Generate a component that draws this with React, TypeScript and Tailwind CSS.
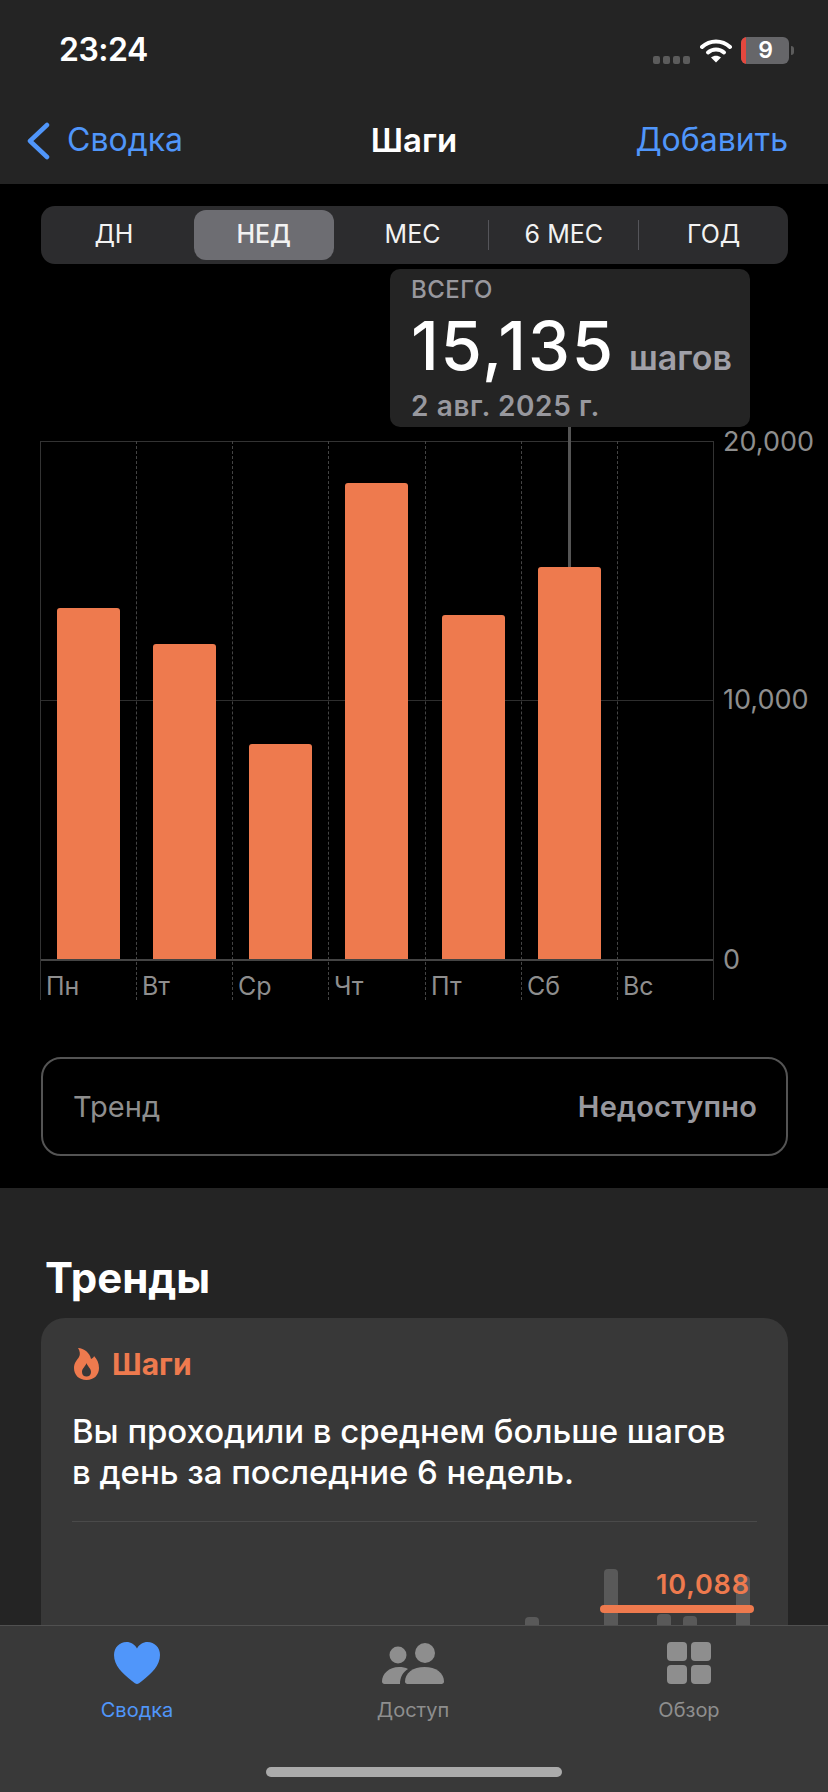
const FONT = "font-['Inter','Noto_Sans',sans-serif]";

const days = [
  { label: "Пн", w: "w-[96px]", top: "pt-[167px]", h: "h-[351px]" },
  { label: "Вт", w: "w-[96px]", top: "pt-[203px]", h: "h-[315px]" },
  { label: "Ср", w: "w-[96px]", top: "pt-[303px]", h: "h-[215px]" },
  { label: "Чт", w: "w-[97px]", top: "pt-[42px]", h: "h-[476px]" },
  { label: "Пт", w: "w-[96px]", top: "pt-[174px]", h: "h-[344px]" },
  { label: "Сб", w: "w-[96px]", top: "pt-[126px]", h: "h-[392px]" },
  { label: "Вс", w: "w-[97px]", top: "pt-[518px]", h: "h-0" },
];

function Wifi() {
  return (
    <svg width="32" height="25" viewBox="0 0 32 25" fill="none">
      <path d="M2 9 C 10 1.5, 22 1.5, 30 9" stroke="#fff" strokeWidth="4" strokeLinecap="round" />
      <path d="M8 14.5 C 12.5 10.5, 19.5 10.5, 24 14.5" stroke="#fff" strokeWidth="4" strokeLinecap="round" />
      <path d="M16 24.5 L11 19.5 C 14 17, 18 17, 21 19.5 Z" fill="#fff" />
    </svg>
  );
}

function Heart() {
  return (
    <svg width="46" height="42" viewBox="0 0 46 42">
      <path
        d="M23 42 C 21.8 42 20.4 41 18 39 C 8 31 0 23.5 0 13 C 0 5.5 5.5 0 12.5 0 C 17 0 20.8 2.4 23 6.5 C 25.2 2.4 29 0 33.5 0 C 40.5 0 46 5.5 46 13 C 46 23.5 38 31 28 39 C 25.6 41 24.2 42 23 42 Z"
        fill="#5096fa"
      />
    </svg>
  );
}

function People() {
  return (
    <svg width="62" height="41" viewBox="0 0 62 41" fill="#8e8e8e">
      <circle cx="16" cy="12" r="8.5" />
      <circle cx="43" cy="10" r="10" />
      <path d="M0 38.5 C 0 31 7 24 17 24 C 20.5 24 23.5 24.6 26 26 C 21 29 18 34 18 41 L2.5 41 C 1 41 0 40 0 38.5 Z" />
      <path d="M23 38.5 C 23 30 31 24 42.5 24 C 54 24 62 30 62 38.5 C 62 40 61 41 59.5 41 L25.5 41 C 24 41 23 40 23 38.5 Z" />
    </svg>
  );
}

function Flame() {
  return (
    <svg width="25" height="32" viewBox="0 0 25 32">
      <path
        d="M4 0 C 10 0 16 5 17 11 C 19 10 20 9 20 8 C 23 11 25 15 25 20 C 25 27 20 32 12.5 32 C 5 32 0 27 0 20 C 0 15 3 12 5 9 C 6.5 6.5 6 3 4 0 Z M12.5 15 C 12 18 8 20 8 24 C 8 27 10 28.5 12.5 28.5 C 15 28.5 17 27 17 24 C 17 20 13 18 12.5 15 Z"
        fill="#ee7a4e"
        fillRule="evenodd"
      />
    </svg>
  );
}

function Segment({ text, active, w }: { text: string; active?: boolean; w: string }) {
  return (
    <div
      className={`${w} h-[50px] flex items-center justify-center text-[25px] text-[#f2f2f2] ${
        active ? "bg-[#6d6d72] rounded-[12px] font-medium" : ""
      }`}
    >
      {text}
    </div>
  );
}

function Tab({ label, active, children }: { label: string; active?: boolean; children: React.ReactNode }) {
  return (
    <div className="w-[150px] flex flex-col items-center">
      <div className="h-[44px] flex items-center">{children}</div>
      <div className={`mt-[13px] text-[20px] leading-[24px] ${active ? "text-[#5096fa]" : "text-[#8e8e8e]"}`}>{label}</div>
    </div>
  );
}

export default function App() {
  return (
    <div className={`${FONT} relative w-[828px] h-[1792px] overflow-hidden bg-black text-white`}>
      {/* Header */}
      <header className="h-[184px] bg-[#242424]">
        <div className="h-[100px] relative">
          <div className="absolute left-[59px] top-[30px] text-[32px] leading-[40px] font-semibold tracking-[-0.5px]">23:24</div>
          <div className="absolute right-[34px] top-[36px] flex items-center">
            <div className="flex gap-[3px] mr-[10px] mt-[20px]">
              <span className="w-[7px] h-[8px] rounded-[2px] bg-[#5c5c5c]" />
              <span className="w-[7px] h-[8px] rounded-[2px] bg-[#5c5c5c]" />
              <span className="w-[7px] h-[8px] rounded-[2px] bg-[#5c5c5c]" />
              <span className="w-[7px] h-[8px] rounded-[2px] bg-[#5c5c5c]" />
            </div>
            <Wifi />
            <div className="ml-[9px] w-[48px] h-[27px] rounded-[6px] overflow-hidden bg-[#666669] flex">
              <span className="w-[5px] bg-[#e5483e]" />
              <span className="flex-1 text-center text-[23px] leading-[27px] font-semibold pr-[4px]">9</span>
            </div>
            <span className="ml-[2px] w-[3px] h-[9px] rounded-r-[3px] bg-[#5c5c5c]" />
          </div>
        </div>
        <div className="relative h-[80px] flex items-center justify-between pl-[26px] pr-[40px]">
          <div className="flex items-center text-[#5096fa] text-[32px]">
            <svg width="24" height="38" viewBox="0 0 24 38" fill="none" className="mt-[2px]">
              <path d="M21 3 L4 19 L21 35" stroke="#5096fa" strokeWidth="4.5" strokeLinecap="round" strokeLinejoin="round" />
            </svg>
            <span className="ml-[17px]">Сводка</span>
          </div>
          <div className="absolute left-0 right-0 top-0 text-center text-[33px] leading-[80px] font-semibold">Шаги</div>
          <div className="text-[#5096fa] text-[32px]">Добавить</div>
        </div>
      </header>

      {/* Chart section */}
      <section className="h-[1004px] pt-[22px] relative">
        <div className="ml-[41px] mr-[40px] h-[58px] rounded-[14px] bg-[#2c2c2e] flex items-center pl-[3px]">
          <Segment text="ДН" w="w-[140px] mr-[10px]" />
          <Segment text="НЕД" active w="w-[140px]" />
          <Segment text="МЕС" w="w-[155px] pl-[3px]" />
          <span className="w-[1px] h-[30px] bg-[#55555a]" />
          <Segment text="6 МЕС" w="w-[149px]" />
          <span className="w-[1px] h-[30px] bg-[#55555a]" />
          <Segment text="ГОД" w="w-[149px]" />
        </div>

        {/* Tooltip */}
        <div className="absolute left-[390px] top-[85px] w-[360px] h-[158px] z-10 rounded-[10px] bg-[#242424] pl-[21px]">
          <div className="text-[24px] leading-[28px] pt-[7px] font-medium tracking-[0.5px] text-[#98989e]">ВСЕГО</div>
          <div className="flex items-baseline mt-[7px] h-[70px]">
            <span className="text-[67px] leading-[70px] font-medium tracking-[1.8px]">15,135</span>
            <span className="ml-[14px] text-[34px] font-semibold text-[#a0a0a8]">шагов</span>
          </div>
          <div className="mt-[8px] text-[28px] leading-[34px] font-semibold tracking-[0.6px] text-[#98989e]">2 авг. 2025 г.</div>
        </div>

        {/* Chart */}
        <div className="relative mt-[177px] ml-[40px] w-[788px] h-[559px]">
          <div className="absolute left-0 w-[674px] top-0 h-[1px] bg-[#333]" />
          <div className="absolute left-0 w-[674px] top-[259px] h-[1px] bg-[#2e2e2e]" />
          <div className="absolute left-0 w-[674px] top-[518px] h-[2px] bg-[#444]" />
          <div className="absolute left-[673px] top-0 h-[559px] w-[1px] bg-[#333]" />
          <div className="absolute left-[683px] top-[-15px] text-[27px] leading-[32px] text-[#8e8e8e]">20,000</div>
          <div className="absolute left-[683px] top-[243px] text-[27px] leading-[32px] text-[#8e8e8e]">10,000</div>
          <div className="absolute left-[683px] top-[503px] text-[27px] leading-[32px] text-[#8e8e8e]">0</div>
          {/* tooltip stem */}
          <div className="absolute left-[528px] top-[-14px] w-[3px] h-[140px] bg-[#555]" />

          <div className="relative flex h-full">
            {days.map((d, i) => (
              <div
                key={d.label}
                className={`${d.w} h-full border-l ${i === 0 ? "border-solid border-[#333]" : "border-dashed border-[#444]"}`}
              >
                <div className={`h-[518px] ${d.top} pl-[16px]`}>
                  <div className={`${d.h} w-[63px] rounded-t-[3px] bg-[#ee7a4e]`} />
                </div>
                <div className="pl-[5px] pt-[12px] text-[25px] leading-[30px] text-[#8e8e8e]">{d.label}</div>
              </div>
            ))}
          </div>
        </div>

        {/* Trend */}
        <div className="mt-[57px] ml-[41px] mr-[40px] h-[99px] rounded-[20px] border-2 border-[#545454] flex items-center justify-between pl-[30px] pr-[29px] text-[29px]">
          <span className="text-[#8e8e8e]">Тренд</span>
          <span className="font-semibold text-[#98989e] tracking-[0.2px]">Недоступно</span>
        </div>
      </section>

      {/* Trends */}
      <section className="h-[604px] bg-[#242424] pt-[66px]">
        <h2 className="ml-[45px] text-[42px] leading-[48px] font-bold">Тренды</h2>
        <div className="mt-[16px] ml-[41px] mr-[40px] h-[500px] rounded-[24px] bg-[#383838] px-[31px] pt-[28px]">
          <div className="flex items-center pl-[2px]">
            <Flame />
            <span className="ml-[13px] text-[30px] leading-[36px] font-bold text-[#ee7a4e]">Шаги</span>
          </div>
          <p className="mt-[29px] text-[33px] leading-[41px] font-medium whitespace-nowrap tracking-[-0.05px]">
            Вы проходили в среднем больше шагов
            <br />в день за последние 6 недель.
          </p>
          <div className="mt-[28px] h-[1px] bg-[#4a4a4a]" />
          {/* Mini chart */}
          <div className="relative h-[110px]">
            <span className="absolute left-[453px] top-[95px] w-[14px] h-[20px] rounded-t-[4px] bg-[#595959]" />
            <span className="absolute left-[532px] top-[47px] w-[14px] h-[70px] rounded-t-[4px] bg-[#595959]" />
            <span className="absolute left-[585px] top-[92px] w-[14px] h-[20px] rounded-t-[4px] bg-[#595959]" />
            <span className="absolute left-[611px] top-[94px] w-[14px] h-[20px] rounded-t-[4px] bg-[#595959]" />
            <span className="absolute left-[664px] top-[54px] w-[14px] h-[60px] rounded-t-[4px] bg-[#595959]" />
            <span className="absolute right-[7px] top-[47px] text-[27px] leading-[32px] font-semibold tracking-[0.9px] text-[#ee7a4e]">10,088</span>
            <span className="absolute left-[528px] top-[83px] w-[154px] h-[8px] rounded-full bg-[#ee7a4e]" />
          </div>
        </div>
      </section>

      {/* Tab bar */}
      <nav className="absolute left-0 right-0 top-[1625px] h-[167px] bg-[#393939] border-t border-[#505050]">
        <div className="flex justify-between pt-[15px] pl-[62px] pr-[64px]">
          <Tab label="Сводка" active>
            <Heart />
          </Tab>
          <Tab label="Доступ">
            <People />
          </Tab>
          <Tab label="Обзор">
            <div className="grid grid-cols-2 gap-[4px]">
              <span className="w-[20px] h-[19px] rounded-[4px] bg-[#8e8e8e]" />
              <span className="w-[20px] h-[19px] rounded-[4px] bg-[#8e8e8e]" />
              <span className="w-[20px] h-[19px] rounded-[4px] bg-[#8e8e8e]" />
              <span className="w-[20px] h-[19px] rounded-[4px] bg-[#8e8e8e]" />
            </div>
          </Tab>
        </div>
        <div className="absolute left-[266px] top-[141px] w-[296px] h-[10px] rounded-full bg-[#ababab]" />
      </nav>
    </div>
  );
}
